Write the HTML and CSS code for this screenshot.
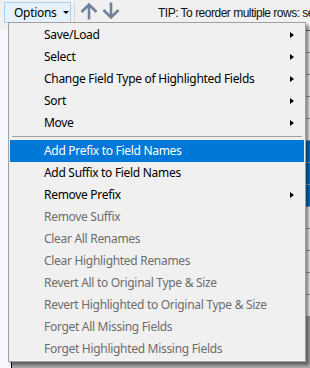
FILE: index.html
```html
<!DOCTYPE html>
<html lang="en">
<head>
    <meta charset="UTF-8">
    <title>Field Options</title>
    <link rel="stylesheet" href="styles.css">
</head>
<body>
    <div class="toolbar">
        <button class="opt-btn">Options <span class="caret"></span></button>
        <span class="tb-sep"></span>
        <svg class="move-icon" width="18" height="18" viewBox="0 0 18 18">
            <path d="M9 17.5V2.5M1.5 10L9 2.5l7.5 7.5" />
        </svg>
        <svg class="move-icon" width="18" height="18" viewBox="0 0 18 18">
            <path d="M9 0.5v15M1.5 8L9 15.5l7.5-7.5" />
        </svg>
        <span class="tip">TIP: To reorder multiple rows: select them and use the arrows</span>
    </div>

    <div class="workspace">
        <div class="side"></div>
        <div class="grid">
            <div class="row"></div>
            <div class="row"></div>
            <div class="row"></div>
            <div class="row"></div>
            <div class="row"></div>
            <div class="row selected"></div>
            <div class="row selected"></div>
            <div class="row selected"></div>
            <div class="row"></div>
            <div class="row"></div>
            <div class="row"></div>
            <div class="row"></div>
            <div class="row"></div>
        </div>
    </div>

    <div class="menu">
        <div class="item sub">Save/Load</div>
        <div class="item sub">Select</div>
        <div class="item sub">Change Field Type of Highlighted Fields</div>
        <div class="item sub">Sort</div>
        <div class="item sub">Move</div>
        <div class="sep"></div>
        <div class="item hot">Add Prefix to Field Names</div>
        <div class="item">Add Suffix to Field Names</div>
        <div class="item sub">Remove Prefix</div>
        <div class="item off">Remove Suffix</div>
        <div class="item off">Clear All Renames</div>
        <div class="item off">Clear Highlighted Renames</div>
        <div class="item off">Revert All to Original Type &amp; Size</div>
        <div class="item off">Revert Highlighted to Original Type &amp; Size</div>
        <div class="item off">Forget All Missing Fields</div>
        <div class="item off">Forget Highlighted Missing Fields</div>
    </div>
</body>
</html>
```

FILE: styles.css
```css
body {
    margin: 0;
    width: 310px;
    height: 368px;
    overflow: hidden;
    position: relative;
    background: #f0f0f0;
    font-family: 'Noto Sans', sans-serif;
    font-size: 12px;
    color: #000;
}

.toolbar {
    height: 30px;
    display: flex;
    align-items: flex-start;
    padding: 2px 0 0 4px;
    box-sizing: border-box;
    overflow: hidden;
}

.toolbar > * {
    flex-shrink: 0;
}

.opt-btn {
    height: 21px;
    width: 67px;
    padding: 0 0 0 9px;
    text-align: left;
    background: #e5f1fb;
    border: 1px solid #a9d0f1;
    font: inherit;
    letter-spacing: -0.3px;
    color: #000;
    display: flex;
    align-items: center;
}

.caret {
    margin-left: 6px;
    border-left: 3px solid transparent;
    border-right: 3px solid transparent;
    border-top: 3px solid #000;
}

.tb-sep {
    width: 1px;
    height: 20px;
    margin: 0 3px 0 3px;
    background: #d5d5d5;
}

.move-icon {
    margin: 0 2px 0 2px;
}

.move-icon path {
    fill: none;
    stroke: #6f819b;
    stroke-width: 2.6;
}

.tip {
    margin: 4px 0 0 36px;
    font-family: 'Liberation Sans', Arial, sans-serif;
    font-size: 12px;
    letter-spacing: -0.5px;
    white-space: nowrap;
    color: #111;
}

.workspace {
    display: flex;
    height: 338px;
}

.side {
    width: 11px;
    background: #f5f7fc;
}

.grid {
    flex: 1;
    background: #ababab;
    border-left: 1px solid #000;
    border-top: 1px solid #6b6b6b;
}

.row {
    height: 21px;
    background: #fff;
    border-bottom: 1px solid #a0a0a0;
}

.row.selected {
    background: #0078d7;
}

.menu {
    position: absolute;
    left: 8px;
    top: 22px;
    width: 294px;
    padding: 1px;
    background: #f0f0f0;
    border: 1px solid #a0a0a0;
    box-shadow: 3px 3px 3px rgba(0, 0, 0, 0.45);
}

.item {
    position: relative;
    height: 22px;
    line-height: 22px;
    padding-left: 34px;
    white-space: nowrap;
    letter-spacing: -0.3px;
}

.item.sub::after {
    content: "";
    position: absolute;
    right: 10px;
    top: 8px;
    border-top: 3.5px solid transparent;
    border-bottom: 3.5px solid transparent;
    border-left: 4px solid #000;
}

.item.hot {
    background: #0078d7;
    color: #fff;
}

.item.off {
    color: #6d6d6d;
}

.sep {
    height: 1px;
    margin: 2px 2px 3px 2px;
    background: #a0a0a0;
}
```
